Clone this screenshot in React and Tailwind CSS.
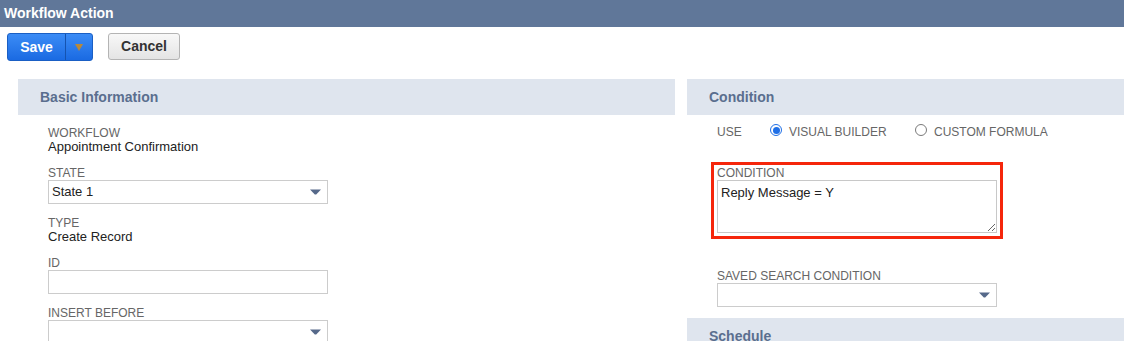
const font = { fontFamily: '"Liberation Sans", Arial, sans-serif' };

function Caret() {
  return (
    <svg width="11" height="6" viewBox="0 0 11 6" className="shrink-0">
      <path d="M0 0.5 H11 L6.2 5.5 H4.8 Z" fill="#56698a" />
    </svg>
  );
}

function Label({ children }) {
  return <div className="text-[12px] leading-[13px] text-[#666] uppercase">{children}</div>;
}

function Value({ children }) {
  return <div className="text-[13px] leading-[14px] text-[#222]">{children}</div>;
}

function Select({ value }) {
  return (
    <div className="w-[280px] h-[24px] border border-[#ccc] bg-white flex items-center justify-between pl-[3px] pr-[6px] text-[13px] text-[#222]">
      <span>{value}</span>
      <Caret />
    </div>
  );
}

function SectionHeader({ children }) {
  return (
    <div className="h-[36px] bg-[#dfe5ee] flex items-center pl-[22px] text-[14px] font-bold text-[#5a6e8e]">
      {children}
    </div>
  );
}

function Radio({ checked }) {
  return checked ? (
    <span className="w-[12px] h-[12px] rounded-full border-[1.5px] border-[#1f6fe6] bg-white flex items-center justify-center shrink-0">
      <span className="w-[7px] h-[7px] rounded-full bg-[#1f6fe6]" />
    </span>
  ) : (
    <span className="w-[12px] h-[12px] rounded-full border border-[#7a7a7a] bg-white shrink-0" />
  );
}

export default function App() {
  return (
    <div className="w-[1124px] h-[341px] overflow-hidden bg-white" style={font}>
      <div className="h-[27px] bg-[#607799] flex items-center pl-[4px] text-[14px] font-bold text-white">
        Workflow Action
      </div>

      <div className="flex gap-[15px] pl-[7px] pt-[6px]">
        <div className="flex h-[28px] rounded-[3px] border border-[#1a5fc4] bg-gradient-to-b from-[#3b8cf6] to-[#1a6ae2] text-white text-[14px] font-bold">
          <span className="w-[57px] flex items-center justify-center">Save</span>
          <span className="w-[27px] border-l border-[#1553b0] flex items-center justify-center">
            <svg width="8" height="7" viewBox="0 0 8 7">
              <path d="M0 0 H8 L4 7 Z" fill="#b8893a" />
            </svg>
          </span>
        </div>
        <div className="h-[27px] w-[72px] rounded-[3px] border border-[#b4b4b4] bg-gradient-to-b from-[#f8f8f8] to-[#e4e4e4] flex items-center justify-center text-[14px] font-bold text-[#333]">
          Cancel
        </div>
      </div>

      <div className="flex gap-[12px] pl-[18px] mt-[18px]">
        <div className="w-[657px] shrink-0">
          <SectionHeader>Basic Information</SectionHeader>
          <div className="pl-[30px] pt-[12px] flex flex-col gap-[13px]">
            <div>
              <Label>Workflow</Label>
              <Value>Appointment Confirmation</Value>
            </div>
            <div>
              <Label>State</Label>
              <Select value="State 1" />
            </div>
            <div>
              <Label>Type</Label>
              <Value>Create Record</Value>
            </div>
            <div>
              <Label>ID</Label>
              <div className="w-[280px] h-[24px] border border-[#ccc] bg-white" />
            </div>
            <div>
              <Label>Insert Before</Label>
              <Select value="" />
            </div>
          </div>
        </div>

        <div className="flex-1">
          <SectionHeader>Condition</SectionHeader>
          <div className="pl-[30px] pt-[9px] pb-[11px]">
            <div className="flex items-start text-[12px] leading-[13px] text-[#666] h-[15px]">
              <span className="mt-[2px] w-[53px]">USE</span>
              <Radio checked />
              <span className="mt-[2px] ml-[7px] w-[126px]">VISUAL BUILDER</span>
              <Radio />
              <span className="mt-[2px] ml-[7px]">CUSTOM FORMULA</span>
            </div>

            <div className="-ml-[6px] mt-[23px] w-[292px] border-[3px] border-[#f5260b] pl-[3px] pr-[3px] pt-[2px] pb-[3px]">
              <Label>Condition</Label>
              <textarea
                defaultValue="Reply Message = Y"
                className="block w-[280px] h-[53px] border border-[#c8c8c8] bg-white px-[3px] pt-[4px] text-[13px] leading-[16px] text-[#222] outline-none"
                style={font}
              />
            </div>

            <div className="mt-[31px]">
              <Label>Saved Search Condition</Label>
              <Select value="" />
            </div>
          </div>
          <SectionHeader>Schedule</SectionHeader>
        </div>
      </div>
    </div>
  );
}
